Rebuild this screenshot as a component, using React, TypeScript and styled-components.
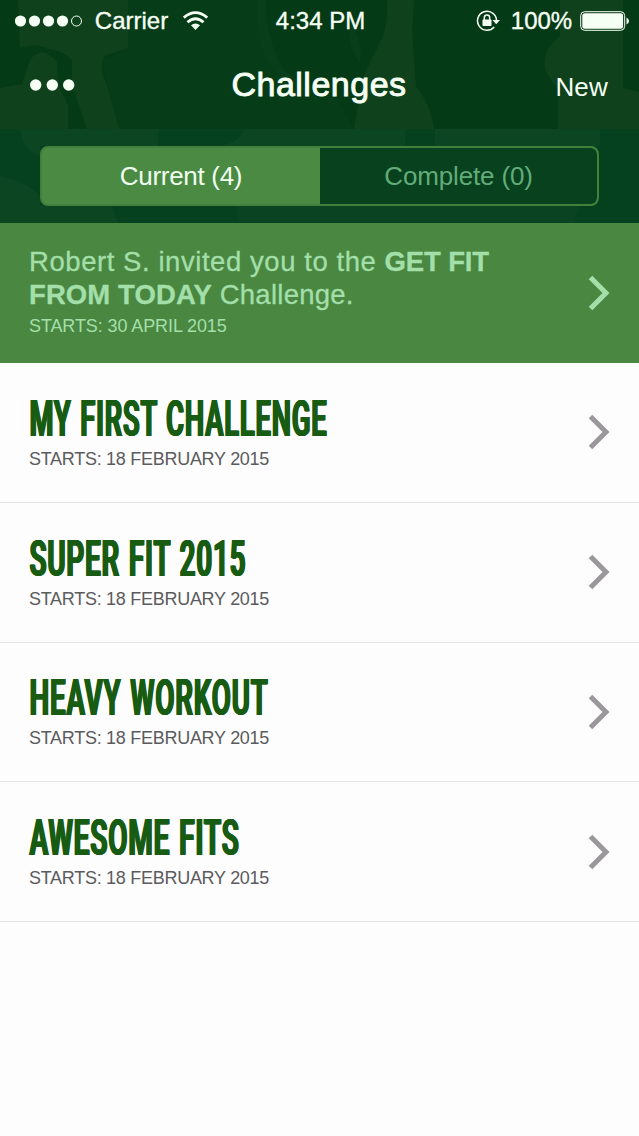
import React from "react";
import styled, { createGlobalStyle } from "styled-components";

const sans = `"Liberation Sans", Arial, sans-serif`;

const GlobalStyle = createGlobalStyle`
  * { box-sizing: border-box; }
  body { margin: 0; background: #fdfdfd; font-family: ${sans}; }
  h1, h2, p { margin: 0; font-weight: 400; }
  button { font: inherit; border: 0; padding: 0; background: none; color: inherit; }
`;

const Screen = styled.main`
  width: 639px;
  min-height: 1136px;
  background: #fdfdfd;
  overflow: hidden;
`;

const Header = styled.header`
  position: relative;
  height: 223px;
  background: #043a16;
  color: #f6fff4;
`;

const Backdrop = styled.svg`
  position: absolute;
  inset: 0;
`;

const StatusBar = styled.div`
  position: relative;
  display: grid;
  grid-template-columns: 1fr auto 1fr;
  height: 40px;
  padding: 1px 10px 0 15px;
  align-items: center;
`;

const StatusGroup = styled.div<{ $end?: boolean }>`
  display: flex;
  align-items: center;
  justify-content: ${(p) => (p.$end ? "flex-end" : "flex-start")};
`;

const Label = styled.span<{ $width: number; $indent?: number; $outdent?: number }>`
  display: block;
  width: ${(p) => p.$width}px;
  padding: 0 ${(p) => p.$outdent ?? 0}px 0 ${(p) => p.$indent ?? 0}px;
  font-size: 24px;
  line-height: 32px;
  white-space: nowrap;
  text-align: center;
  -webkit-text-stroke: 0.35px currentColor;
`;

const NavBar = styled.div`
  position: relative;
  display: grid;
  grid-template-columns: 1fr auto 1fr;
  align-items: center;
  height: 89px;
  padding: 0 31px 0 30px;
`;

const Title = styled.h1`
  font-size: 34px;
  line-height: 40px;
  letter-spacing: 0.5px;
  padding-bottom: 1px;
  -webkit-text-stroke: 0.9px currentColor;
`;

const NewButton = styled.button`
  justify-self: end;
  padding-top: 5px;
  font-size: 26px;
  line-height: 32px;
  letter-spacing: 0.2px;
`;

const Tabs = styled.div`
  position: relative;
  display: grid;
  grid-template-columns: 278px 1fr;
  width: 559px;
  height: 60px;
  margin: 17px 0 0 40px;
  border: 2px solid #40803b;
  border-radius: 8px;
  background: #4a8a43;
  overflow: hidden;
`;

const Tab = styled.button<{ $active?: boolean }>`
  background: ${(p) => (p.$active ? "#4a8a43" : "#07411d")};
  color: ${(p) => (p.$active ? "#f1fff0" : "#62ac7a")};
  border-radius: ${(p) => (p.$active ? "0" : "0 6px 6px 0")};
  font-size: 26px;
  letter-spacing: ${(p) => (p.$active ? -0.3 : -0.15)}px;
`;

const Row = styled.section<{ $invite?: boolean }>`
  display: flex;
  align-items: center;
  justify-content: space-between;
  height: ${(p) => (p.$invite ? 140 : 139.75)}px;
  padding: 0 29px;
  background: ${(p) => (p.$invite ? "#4a8842" : "#fdfdfd")};
  color: ${(p) => (p.$invite ? "#a3dfa9" : "#5b5b5e")};
  border-bottom: ${(p) => (p.$invite ? "0" : "1px solid #e6e6e6")};
`;

const Invitation = styled.p`
  font-size: 27.5px;
  line-height: 33px;
  white-space: nowrap;
  -webkit-text-stroke: 0.3px currentColor;
`;

const Part = styled.span<{ $tracking: number; $strong?: boolean }>`
  font-weight: ${(p) => (p.$strong ? 700 : 400)};
  letter-spacing: ${(p) => p.$tracking}px;
`;

const Starts = styled.p<{ $gap: number; $tracking: number }>`
  font-size: 18px;
  line-height: 22px;
  letter-spacing: ${(p) => p.$tracking}px;
  margin-top: ${(p) => p.$gap}px;
  white-space: nowrap;
`;

const ChallengeName = styled.h2<{ $stretch: number }>`
  width: max-content;
  padding-left: 1px;
  color: #185c14;
  font: 600 49.5px/44px Roboto, sans-serif;
  letter-spacing: 1.6px;
  word-spacing: 2px;
  white-space: nowrap;
  text-shadow: -1.5px 0 currentColor, -0.8px 0 currentColor, 0.8px 0 currentColor, 1.5px 0 currentColor;
  transform: scaleX(${(p) => p.$stretch});
  transform-origin: left;
`;

const Copy = styled.div<{ $lift?: number; $drop?: number }>`
  width: 480px;
  padding-top: ${(p) => p.$drop ?? 0}px;
  padding-bottom: ${(p) => p.$lift ?? 0}px;
`;

const Chevron = ({ color }: { color: string }) => (
  <svg width="22" height="36" viewBox="0 0 22 36" fill="none">
    <path d="M2.5 2.5 18 18 2.5 33.5" stroke={color} strokeWidth="5" />
  </svg>
);

const challenges = [
  { name: "MY FIRST CHALLENGE", stretch: 0.55 },
  { name: "SUPER FIT 2015", stretch: 0.559 },
  { name: "HEAVY WORKOUT", stretch: 0.558 },
  { name: "AWESOME FITS", stretch: 0.563 },
];

export default function App() {
  return (
    <>
      <GlobalStyle />
      <Screen>
        <Header>
          <Backdrop width="639" height="223" viewBox="0 0 639 223">
            <path d="M126 0H257Q254 40 270 62L338 100 354 129H119L102 60 126 50Z" fill="#063d18" />
            <g fill="#0f421c">
              <path d="M18 0H128V48L104 56Q99 70 107 85L119 129H87L72 85V60Q61 49 48 49Q35 42 20 48Z" />
              <path d="M0 88 22 84 30 60Q42 44 57 62L58 85 68 105V129H0Z" />
              <path d="M387 0Q388 20 383 37L363 77 354 129H434Q430 102 416 87L412 30 414 0Z" />
              <path d="M560 0H623V88L639 92V129H558V90L546 72Q540 52 560 36Z" />
            </g>
            <path d="M257 0H266Q266 40 284 70L312 95Q280 85 268 62Q254 36 257 0ZM346 20Q364 36 360 62Q352 56 350 40Z" fill="#083e19" />
            <path d="M0 129H639V223H0Z" fill="#05411f" />
            <g fill="#0b4522">
              <path d="M20 129H158V146H40V156Q22 150 20 129Z" />
              <path d="M245 129H405V146H220Q240 142 245 129ZM435 129H600V146H435Z" />
              <path d="M0 176Q28 182 40 196V206H112L118 223H0Z" />
              <path d="M235 206H440V223H240ZM440 206H580L574 223H440Z" opacity=".7" />
            </g>
          </Backdrop>
          <StatusBar>
            <StatusGroup>
              <svg width="68" height="14" viewBox="0 0 68 14" fill="#f6fff4">
                {[5.5, 19.5, 33.5, 47.5].map((x) => (
                  <circle key={x} cx={x} cy="7" r="5.6" />
                ))}
                <circle cx="61.5" cy="7" r="5" fill="none" stroke="#f6fff4" strokeWidth="1" />
              </svg>
              <Label $width={97}>Carrier</Label>
              <svg width="30" height="20" viewBox="0 0 30 20" fill="none" stroke="#f6fff4" strokeWidth="2.8">
                <path d="M3.8 6.6Q15.5-3.4 27.2 6.6M7.5 11.3Q15.5 4.2 23.5 11.3" />
                <path d="M11 14.2Q15.5 10.6 20 14.2L15.5 19Z" fill="#f6fff4" stroke="none" />
              </svg>
            </StatusGroup>
            <Label $width={96} $outdent={3}>4:34 PM</Label>
            <StatusGroup $end>
              <svg width="24" height="22" viewBox="0 0 24 22" fill="none" stroke="#f6fff4">
                <path d="M18.2 17A9.5 9.5 0 1 1 20.5 10" strokeWidth="1.5" />
                <path d="M16.5 10H24L20.2 14.2Z" fill="#f6fff4" stroke="none" />
                <rect x="6.5" y="9.5" width="9" height="6.5" rx=".8" fill="#f6fff4" stroke="none" />
                <path d="M8.3 10V7.7A2.7 2.7 0 0 1 13.7 7.7V10" strokeWidth="1.5" />
              </svg>
              <Label $width={80} $indent={3}>100%</Label>
              <svg width="49" height="20" viewBox="0 0 49 20" fill="#f6fff4">
                <rect x=".7" y=".7" width="44" height="18.6" rx="4" fill="none" stroke="#f6fff4" strokeWidth="1" />
                <rect x="2.3" y="2.3" width="40.8" height="15.4" rx="2.5" />
                <path d="M46.5 6.5Q49 7.5 49 10T46.5 13.5Z" />
              </svg>
            </StatusGroup>
          </StatusBar>
          <NavBar>
            <svg width="46" height="14" viewBox="0 0 46 14" fill="#f6fff4">
              {[5.7, 22.3, 38.7].map((x) => (
                <circle key={x} cx={x} cy="7" r="5.7" />
              ))}
            </svg>
            <Title>Challenges</Title>
            <NewButton>New</NewButton>
          </NavBar>
          <Tabs>
            <Tab $active>Current (4)</Tab>
            <Tab>Complete (0)</Tab>
          </Tabs>
        </Header>
        <Row $invite>
          <Copy $lift={4}>
            <Invitation>
              <Part $tracking={0.56}>Robert S. invited you to the </Part>
              <Part $strong $tracking={-0.15}>GET FIT</Part>
            </Invitation>
            <Invitation>
              <Part $strong $tracking={0.1}>FROM TODAY</Part>
              <Part $tracking={0.25}> Challenge.</Part>
            </Invitation>
            <Starts $gap={4} $tracking={-0.1}>STARTS: 30 APRIL 2015</Starts>
          </Copy>
          <Chevron color="#a3dfa9" />
        </Row>
        {challenges.map((c) => (
          <Row key={c.name}>
            <Copy $drop={2}>
              <ChallengeName $stretch={c.stretch}>{c.name}</ChallengeName>
              <Starts $gap={7} $tracking={-0.28}>STARTS: 18 FEBRUARY 2015</Starts>
            </Copy>
            <Chevron color="#9b979d" />
          </Row>
        ))}
      </Screen>
    </>
  );
}
